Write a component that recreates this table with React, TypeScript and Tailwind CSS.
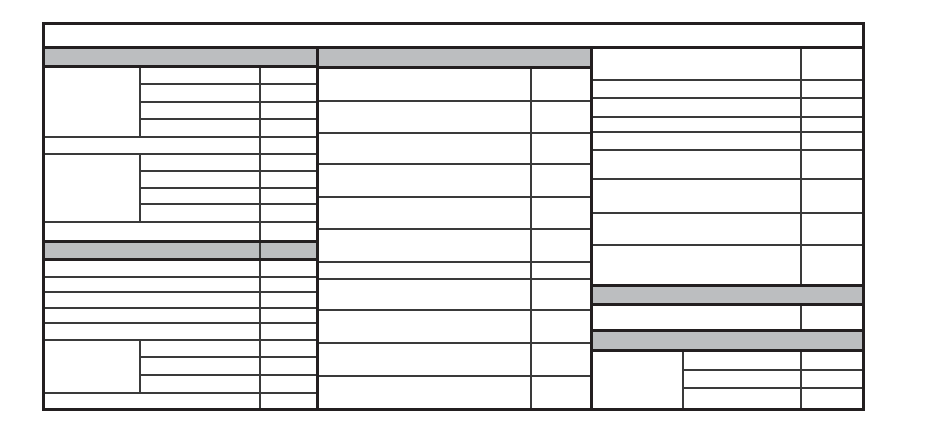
import React from "react";

// thin rule between cells, thick rule around sections
const thin = "border-[#3a3a3a]";
const gray = "bg-[#bcbec0]";

type Row = { h: number; last?: boolean };

// a cell row with one wide label cell and one narrow value cell
const Pair: React.FC<{ h: number; left: number; last?: boolean }> = ({ h, left, last }) => (
  <div
    className={`flex ${last ? "" : "border-b-2"} ${thin}`}
    style={{ height: h }}
  >
    <div className={`border-r-2 ${thin}`} style={{ width: left }} />
    <div className="flex-1" />
  </div>
);

// a block with a merged cell on the left and stacked sub rows on the right
const Group: React.FC<{ rows: Row[]; first: number; mid: number; last?: boolean }> = ({
  rows,
  first,
  mid,
  last,
}) => (
  <div className={`flex ${last ? "" : "border-b-2"} ${thin}`}>
    <div className={`border-r-2 ${thin}`} style={{ width: first }} />
    <div className="flex flex-1 flex-col">
      {rows.map((r, i) => (
        <Pair key={i} h={r.h} left={mid} last={i === rows.length - 1} />
      ))}
    </div>
  </div>
);

const GrayBar: React.FC<{ h: number; top?: boolean; split?: number }> = ({ h, top, split }) => (
  <div
    className={`flex ${gray} border-b-[3px] ${top ? "border-t-[3px]" : ""} border-[#231f20]`}
    style={{ height: h }}
  >
    {split ? <div className={`border-r-2 ${thin}`} style={{ width: split }} /> : null}
  </div>
);

const ColumnOne = () => (
  <div className="flex w-[274px] flex-col border-r-[3px] border-[#231f20]">
    <GrayBar h={20} />
    <Group first={96} mid={120} rows={[{ h: 17 }, { h: 18 }, { h: 17 }, { h: 16 }]} />
    <Pair h={17} left={216} />
    <Group first={96} mid={120} rows={[{ h: 17 }, { h: 17 }, { h: 16 }, { h: 16 }]} />
    <Pair h={18} left={216} last />
    <GrayBar h={22} top split={216} />
    {[17, 16, 16, 16, 17].map((h, i) => (
      <Pair key={i} h={h} left={216} />
    ))}
    <Group first={96} mid={120} rows={[{ h: 17 }, { h: 18 }, { h: 16 }]} />
    <Pair h={15} left={216} last />
  </div>
);

const ColumnTwo = () => {
  const rows = [33, 32, 31, 33, 32, 33, 17, 31, 33, 33, 31];
  return (
    <div className="flex w-[274px] flex-col border-r-[3px] border-[#231f20]">
      <GrayBar h={20} />
      {rows.map((h, i) => (
        <Pair key={i} h={h} left={213} last={i === rows.length - 1} />
      ))}
    </div>
  );
};

const ColumnThree = () => {
  const rows = [32, 18, 19, 15, 18, 29, 34, 32, 38];
  return (
    <div className="flex flex-1 flex-col">
      {rows.map((h, i) => (
        <Pair key={i} h={h} left={209} last={i === rows.length - 1} />
      ))}
      <GrayBar h={22} top />
      <Pair h={23} left={209} last />
      <GrayBar h={23} top />
      <Group first={91} mid={118} rows={[{ h: 19 }, { h: 18 }, { h: 19 }]} last />
    </div>
  );
};

export default function App() {
  return (
    <div className="h-[438px] w-[940px] bg-white pl-[42px] pt-[22px]">
      <div className="flex h-[389px] w-[823px] flex-col border-[3px] border-[#231f20]">
        <div className="h-[24px] border-b-[3px] border-[#231f20]" />
        <div className="flex h-[359px]">
          <ColumnOne />
          <ColumnTwo />
          <ColumnThree />
        </div>
      </div>
    </div>
  );
}
